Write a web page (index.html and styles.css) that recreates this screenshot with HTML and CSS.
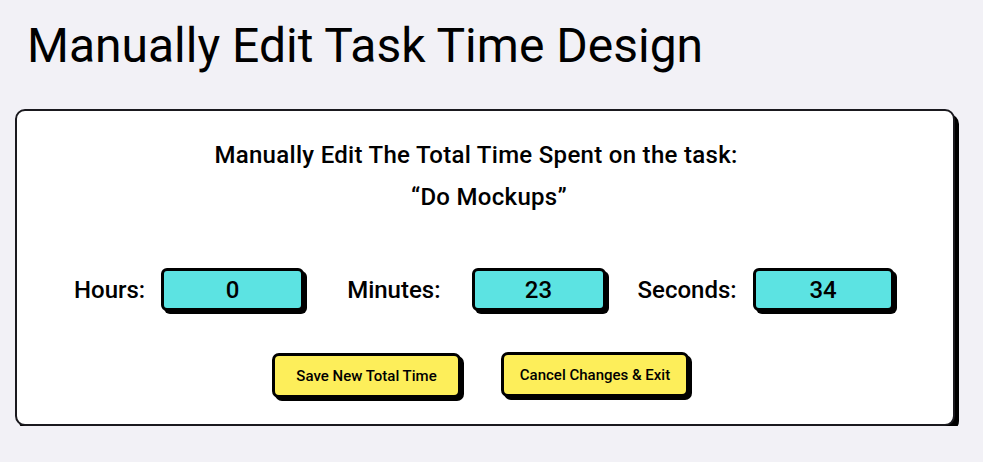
FILE: index.html
```html
<!DOCTYPE html>
<html lang="en">
<head>
<meta charset="utf-8">
<title>Manually Edit Task Time Design</title>
<link rel="stylesheet" href="styles.css">
</head>
<body>
  <h1 class="page-title">Manually Edit Task Time Design</h1>
  <section class="card">
    <p class="prompt">Manually Edit The Total Time Spent on the task:</p>
    <p class="task-name">“Do Mockups”</p>
    <div class="time-row">
      <label class="field field-hours"><span class="field-label">Hours:</span><span class="time-box">0</span></label>
      <label class="field field-minutes"><span class="field-label">Minutes:</span><span class="time-box">23</span></label>
      <label class="field field-seconds"><span class="field-label">Seconds:</span><span class="time-box">34</span></label>
    </div>
    <div class="actions">
      <button class="btn">Save New Total Time</button>
      <button class="btn btn-cancel">Cancel Changes &amp; Exit</button>
    </div>
  </section>
</body>
</html>
```
FILE: styles.css
```css
* { box-sizing: border-box; }
body {
  margin: 0;
  background: #f2f1f6;
  font-family: Roboto, "Liberation Sans", sans-serif;
  color: #000;
}
.page-title {
  margin: 0;
  padding: 18px 0 0 27px;
  font-size: 48px;
  font-weight: 400;
  line-height: 56px;
}
.card {
  margin: 35px 0 0 15px;
  width: 940px;
  height: 317px;
  background: #fff;
  border: 2px solid #1a191e;
  border-radius: 10px;
  box-shadow: 4px 5px 0 #000;
  padding-top: 30px;
}
.prompt, .task-name {
  margin: 0;
  text-align: center;
  font-size: 24px;
  font-weight: 500;
  line-height: 28px;
  letter-spacing: 0.3px;
}
.prompt { padding-right: 18px; }
.task-name { margin-top: 14px; padding-left: 8px; }
.time-row {
  display: flex;
  align-items: center;
  margin-top: 57px;
  padding-left: 57px;
}
.field { display: flex; align-items: center; }
.field-label {
  font-size: 24px;
  font-weight: 500;
  line-height: 28px;
}
.time-box {
  width: 143px;
  height: 43px;
  display: flex;
  align-items: center;
  justify-content: center;
  background: #5ce3e2;
  border: 3px solid #000;
  border-radius: 6px;
  box-shadow: 3px 3px 0 #000;
  font-size: 24px;
  font-weight: 500;
}
.field-hours .time-box { margin-left: 16px; }
.field-minutes { margin-left: 43px; }
.field-minutes .time-box { margin-left: 31px; width: 134px; }
.field-seconds { margin-left: 32px; }
.field-seconds .time-box { margin-left: 16px; width: 141px; }
.actions {
  display: flex;
  justify-content: center;
  gap: 40px;
  margin-top: 42px;
  padding-right: 9px;
}
.btn {
  width: 189px;
  height: 45px;
  background: #fdee5a;
  border: 3px solid #000;
  border-radius: 7px;
  box-shadow: 3px 3px 0 #000;
  font-family: Roboto, "Liberation Sans", sans-serif;
  font-size: 15px;
  font-weight: 500;
  color: #000;
  padding: 0;
}
.btn-cancel { width: 188px; margin-top: -1px; }
```
